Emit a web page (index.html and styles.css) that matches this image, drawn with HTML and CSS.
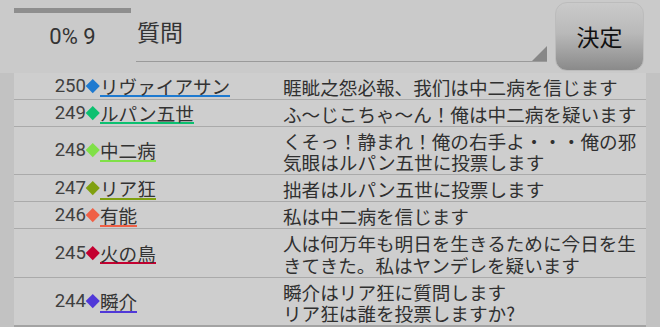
FILE: index.html
```html
<!DOCTYPE html>
<html lang="ja">
<head>
<meta charset="utf-8">
<link rel="stylesheet" href="styles.css">
</head>
<body>
<div class="app">
  <header class="top">
    <div class="status">
      <div class="progress"></div>
      <div class="pct">0% 9</div>
    </div>
    <div class="question">
      <span class="q-label">質問</span>
      <span class="corner"></span>
    </div>
    <button class="decide">決定</button>
  </header>
  <main class="board">
    <div class="gutter"></div>
    <ul class="log">
      <li class="row">
        <div class="who"><span class="no">250</span><span class="gem c1"></span><span class="name u1">リヴァイアサン</span></div>
        <div class="msg">睚眦之怨必報、我们は中二病を信じます</div>
      </li>
      <li class="row">
        <div class="who"><span class="no">249</span><span class="gem c2"></span><span class="name u2">ルパン五世</span></div>
        <div class="msg">ふ～じこちゃ～ん！俺は中二病を疑います</div>
      </li>
      <li class="row">
        <div class="who"><span class="no">248</span><span class="gem c3"></span><span class="name u3">中二病</span></div>
        <div class="msg">くそっ！静まれ！俺の右手よ・・・俺の邪気眼はルパン五世に投票します</div>
      </li>
      <li class="row">
        <div class="who"><span class="no">247</span><span class="gem c4"></span><span class="name u4">リア狂</span></div>
        <div class="msg">拙者はルパン五世に投票します</div>
      </li>
      <li class="row">
        <div class="who"><span class="no">246</span><span class="gem c5"></span><span class="name u5">有能</span></div>
        <div class="msg">私は中二病を信じます</div>
      </li>
      <li class="row">
        <div class="who"><span class="no">245</span><span class="gem c6"></span><span class="name u6">火の鳥</span></div>
        <div class="msg">人は何万年も明日を生きるために今日を生きてきた。私はヤンデレを疑います</div>
      </li>
      <li class="row">
        <div class="who"><span class="no">244</span><span class="gem c7"></span><span class="name u7">瞬介</span></div>
        <div class="msg">瞬介はリア狂に質問します<br>リア狂は誰を投票しますか?</div>
      </li>
    </ul>
    <div class="gutter"></div>
  </main>
</div>
</body>
</html>
```

FILE: styles.css
```css
* { box-sizing: border-box; }
html, body {
  margin: 0;
  padding: 0;
  background: #c9c9c9;
  width: 660px;
  height: 327px;
  overflow: hidden;
  font-family: "Noto Sans CJK JP", "Noto Sans", sans-serif;
  color: #333;
}
.app {
  display: flex;
  flex-direction: column;
  height: 327px;
}
.top {
  display: flex;
  height: 73px;
  background: #cacaca;
}
.status {
  width: 136px;
  padding-left: 14px;
  padding-right: 5px;
  padding-top: 8px;
}
.progress {
  height: 5px;
  background: #8e8e8e;
}
.pct {
  margin-top: 11px;
  font-family: Roboto, "Noto Sans", sans-serif;
  font-size: 22px;
  line-height: 26px;
  text-align: center;
  color: #333;
}
.question {
  position: relative;
  width: 411px;
  height: 62px;
  border-bottom: 1.5px solid #9a9a9a;
  padding-top: 18px;
  padding-left: 1px;
}
.q-label {
  font-size: 23px;
  line-height: 26px;
  color: #333;
}
.corner {
  position: absolute;
  right: 0;
  bottom: 0;
  width: 0;
  height: 0;
  border-style: solid;
  border-width: 0 0 15px 15px;
  border-color: transparent transparent #878787 transparent;
}
.decide {
  margin: 2px 0 0 8px;
  width: 89px;
  height: 69px;
  border: 1px solid #bcbcbc;
  border-radius: 12px;
  background: linear-gradient(to bottom, #cacaca 0%, #b9b9b9 45%, #8a8a8a 100%);
  font-family: "Noto Sans CJK JP", sans-serif;
  font-size: 23px;
  color: #111;
  padding: 0;
  line-height: 26px;
  padding-bottom: 2px;
}
.board {
  flex: 1;
  display: flex;
  align-items: flex-start;
  background: #c9c9c9;
}
.gutter {
  width: 14px;
  align-self: stretch;
  background: #c2c2c2;
}
.log {
  list-style: none;
  margin: 0;
  padding: 0;
  width: 632px;
  background: #cecece;
}
.row {
  display: flex;
  padding: 3px 0 1.5px 0;
  border-bottom: 1px solid #aaaaaa;
  font-size: 18.6px;
  line-height: 21.5px;
}
.row:last-child { border-bottom: 2px solid #a3a3a3; }
.who {
  width: 269px;
  display: flex;
  align-items: center;
}
.no {
  width: 72px;
  text-align: right;
  font-family: Roboto, "Noto Sans", sans-serif;
  color: #404040;
}
.gem {
  width: 14px;
  height: 21px;
  display: flex;
  align-items: center;
  justify-content: center;
}
.gem::before {
  content: "";
  width: 9.5px;
  height: 9.5px;
  transform: rotate(45deg);
  background: currentColor;
  margin-top: -2px;
}
.name {
  display: block;
  height: 21.5px;
  line-height: 19.5px;
  border-bottom: 2px solid currentColor;
  color: #333;
}
.msg {
  flex: 1;
  color: #303030;
  padding-right: 8px;
}
.c1 { color: #1e7ad0; }
.c2 { color: #0cc070; }
.c3 { color: #80e048; }
.c4 { color: #80a010; }
.c5 { color: #f06046; }
.c6 { color: #c40030; }
.c7 { color: #5038d8; }
.u1 { border-bottom-color: #1e7ad0; }
.u2 { border-bottom-color: #0cc070; }
.u3 { border-bottom-color: #80e048; }
.u4 { border-bottom-color: #80a010; }
.u5 { border-bottom-color: #f06046; }
.u6 { border-bottom-color: #c40030; }
.u7 { border-bottom-color: #5038d8; }
```
